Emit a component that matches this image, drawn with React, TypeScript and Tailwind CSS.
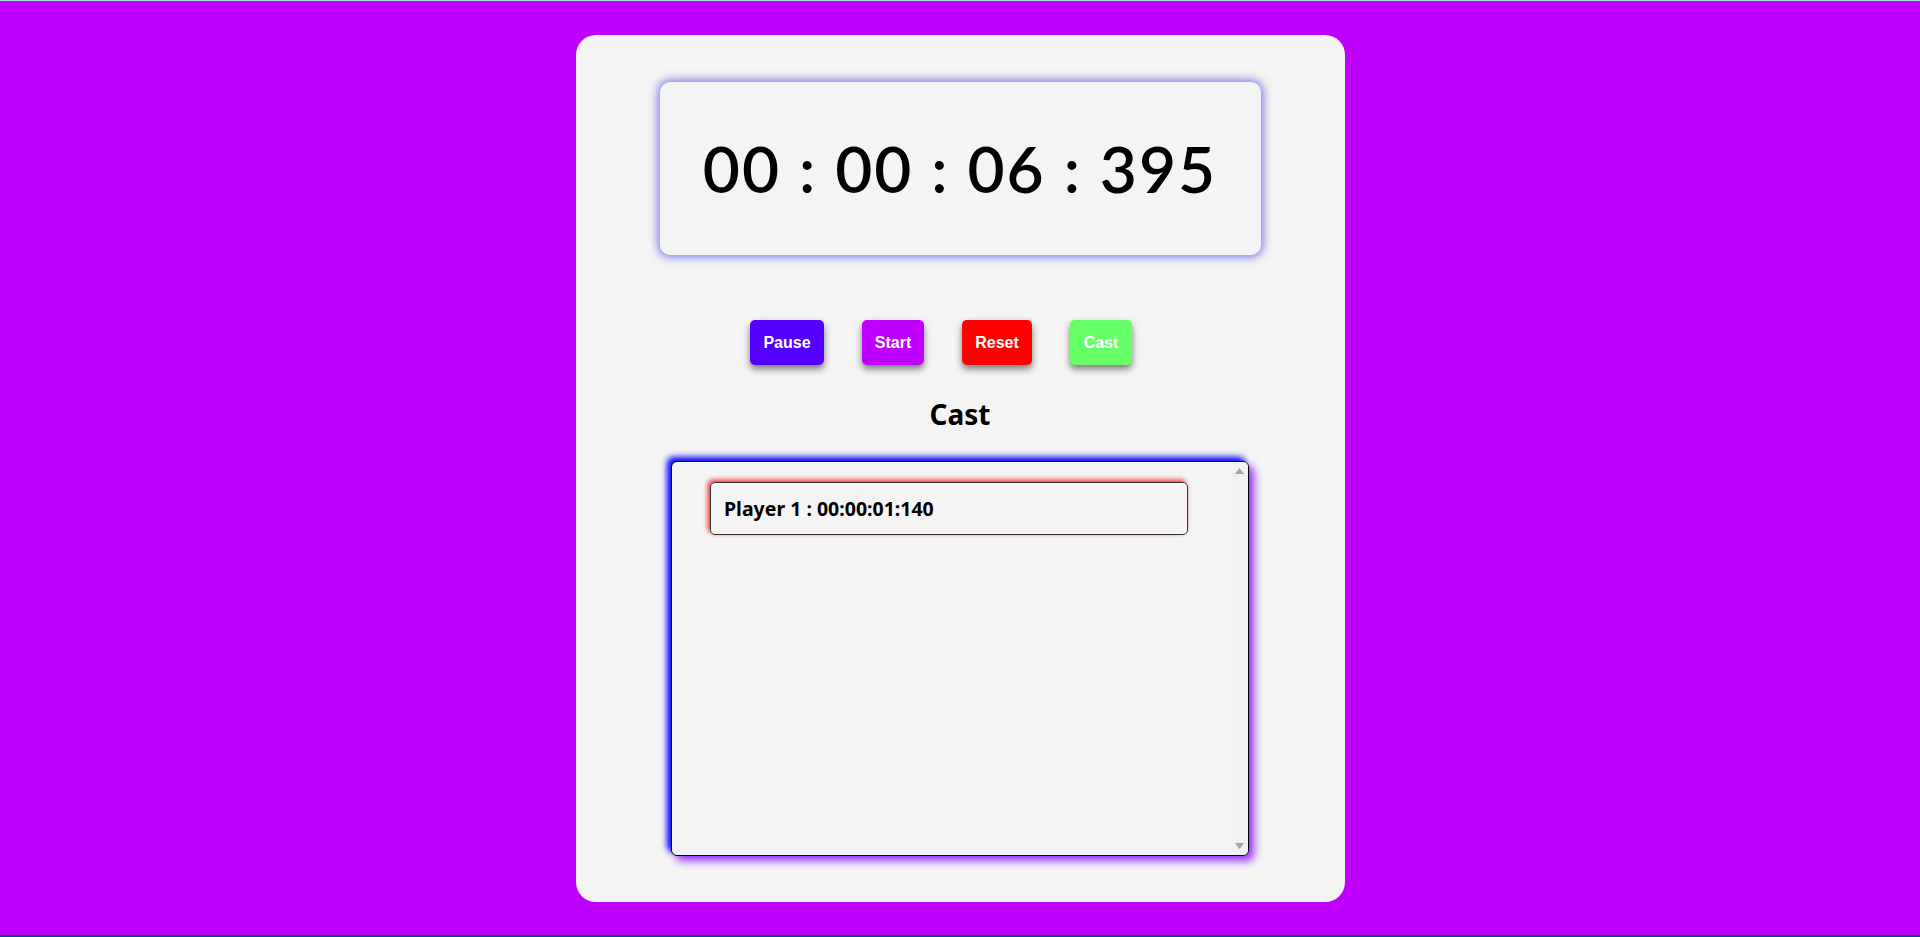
import React from "react";

export default function App() {
  const buttons = [
    { label: "Pause", bg: "bg-[#5500ff]", w: "w-[74px]" },
    { label: "Start", bg: "bg-[#bf00ff]", w: "w-[62px]" },
    { label: "Reset", bg: "bg-[#ff0000]", w: "w-[70px]" },
    { label: "Cast", bg: "bg-[#66ff66]", w: "w-[62px]" },
  ];
  return (
    <div className="min-h-[937px] h-[937px] bg-[#bf00ff] flex flex-col overflow-hidden">
      <div className="h-[1px] bg-[#a8dbe8] shrink-0" />
      <div className="flex-1 pt-[34px]">
        <div className="mx-auto w-[769px] h-[867px] rounded-[20px] bg-[#f4f4f4] flex flex-col items-center pt-[47px]">
          <div className="w-[601px] h-[173px] rounded-[10px] bg-[#f4f4f4] shadow-[0_0_10px_2px_rgba(80,80,230,0.75)] flex items-center justify-center">
            <span
              className="text-[64px] font-semibold text-black leading-none tracking-[2px]"
              style={{ fontFamily: "Lato, 'Noto Sans', sans-serif" }}
            >
              00 : 00 : 06 : 395
            </span>
          </div>

          <div className="mt-[65px] flex">
            {buttons.map((b) => (
              <button
                key={b.label}
                className={`${b.bg} ${b.w} h-[45px] mr-[38px] rounded-[5px] text-white font-bold text-[16px] shadow-[0_4px_7px_rgba(0,0,0,0.5)] flex items-center justify-center`}
                style={{ fontFamily: "'Liberation Sans', Arial, sans-serif" }}
              >
                {b.label}
              </button>
            ))}
          </div>

          <div
            className="mt-[31px] text-[28px] font-bold text-black leading-[36px]"
            style={{ fontFamily: "'Noto Sans', sans-serif" }}
          >
            Cast
          </div>

          <div className="mt-[29px] w-[578px] h-[395px] rounded-[6px] border border-black bg-[#f4f4f4] shadow-[-4px_-4px_6px_#0000ff,5px_5px_8px_#9b30ff] flex overflow-hidden">
            <div className="flex-1 pt-[20px] pl-[38px]">
              <div className="w-[478px] h-[53px] rounded-[5px] border border-[#333] shadow-[-2px_-2px_5px_#ff2020] flex items-center pl-[13px]">
                <span
                  className="text-[19.5px] font-bold text-black"
                  style={{ fontFamily: "'Noto Sans', sans-serif" }}
                >
                  Player 1 : 00:00:01:140
                </span>
              </div>
            </div>
            <div className="w-[17px] bg-[#f1f1f1] flex flex-col justify-between items-center py-[6px]">
              <svg width="9" height="6" viewBox="0 0 9 6">
                <path d="M0 6 L4.5 0 L9 6 Z" fill="#a3a3a3" />
              </svg>
              <svg width="9" height="6" viewBox="0 0 9 6">
                <path d="M0 0 L4.5 6 L9 0 Z" fill="#a3a3a3" />
              </svg>
            </div>
          </div>
        </div>
      </div>
      <div className="h-[2px] bg-[#0b4a6e] shrink-0" />
    </div>
  );
}
